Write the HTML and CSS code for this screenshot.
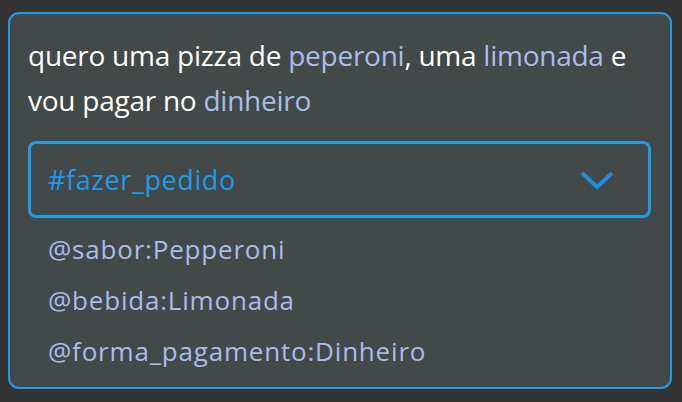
FILE: index.html
```html
<!DOCTYPE html>
<html>
<head>
<meta charset="utf-8">
<link rel="stylesheet" href="styles.css">
</head>
<body>
<div class="card">
  <p class="utterance">quero uma pizza de <span class="ent">peperoni</span>, uma <span class="ent">limonada</span> e vou pagar no <span class="ent">dinheiro</span></p>
  <div class="select">
    <span class="intent">#fazer_pedido</span>
    <svg class="chev" width="34" height="20" viewBox="0 0 34 20"><path d="M2 3 L17 17 L32 3" fill="none" stroke="#1c8fd6" stroke-width="4"/></svg>
  </div>
  <ul class="entities">
    <li>@sabor:Pepperoni</li>
    <li>@bebida:Limonada</li>
    <li>@forma_pagamento:Dinheiro</li>
  </ul>
</div>
</body>
</html>
```
FILE: styles.css
```css
html, body { margin: 0; padding: 0; }
body {
  background: #333333;
  width: 682px;
  height: 402px;
  padding: 12px 10px 0 8px;
  box-sizing: border-box;
  font-family: "Open Sans", "Noto Sans", sans-serif;
}
.card {
  box-sizing: border-box;
  width: 664px;
  height: 377px;
  border: 2px solid #1e9be9;
  border-radius: 11px;
  background: #434848;
  padding: 26px 19px 0 18px;
}
.utterance {
  margin: 0;
  color: #ffffff;
  font-size: 28px;
  letter-spacing: -0.25px;
  line-height: 45px;
  margin-top: -7px;
}
.ent { color: #a9bdea; }
.select {
  margin-top: 18px;
  height: 77px;
  box-sizing: border-box;
  border: 3px solid #1e9be9;
  border-radius: 8px;
  display: flex;
  align-items: center;
  justify-content: space-between;
  padding: 0 34px 0 17px;
}
.intent {
  color: #1e9be9;
  font-size: 27px;
  letter-spacing: 0.6px;
}
.entities {
  list-style: none;
  margin: 6px 0 0;
  padding: 0 0 0 20px;
}
.entities li {
  color: #a9bdea;
  font-size: 26px;
  letter-spacing: 0.8px;
  line-height: 51px;
}
```
